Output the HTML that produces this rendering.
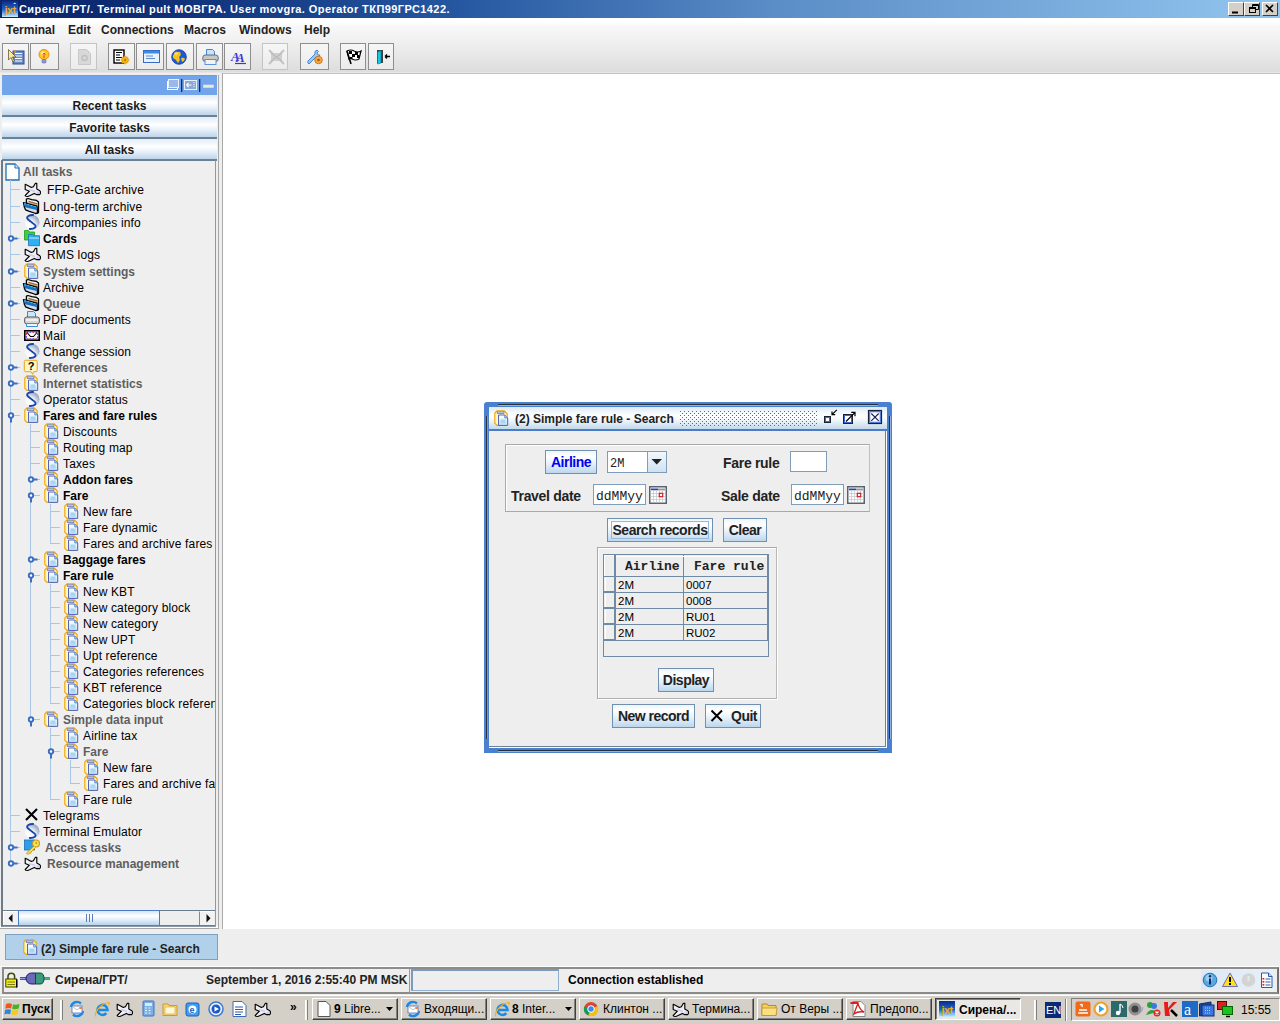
<!DOCTYPE html>
<html><head><meta charset="utf-8">
<style>
*{margin:0;padding:0;box-sizing:border-box}
html,body{width:1280px;height:1024px;overflow:hidden;background:#fff;font-family:"Liberation Sans",sans-serif;font-size:12px;color:#000}
.a{position:absolute}
.t{position:absolute;white-space:nowrap;line-height:16px;height:16px}
#tree .t{letter-spacing:0.15px}
#tree .t.b{letter-spacing:0}
.b{font-weight:bold}
.g{color:#5e5e5e}
.m{font-family:"Liberation Mono",monospace}
svg{position:absolute;overflow:visible}
/* toolbar button */
.tb{position:absolute;top:43px;width:27px;height:27px;border:1px solid #8e8e8e;background:linear-gradient(#f6f6f6,#ebebeb)}
.tb.d{border-color:#c4c4c4}
/* panel buttons */
.pb{position:absolute;left:2px;width:215px;height:22px;border-bottom:2px solid #6b8296;background:linear-gradient(#e2edf7 0%,#ffffff 40%,#e6eff8 65%,#bcd4ea 100%);text-align:center;font-weight:bold;color:#1a1a1a;line-height:21px;padding-top:1px;font-size:12px}
/* dialog buttons */
.db{position:absolute;border:1px solid #7190b0;background:linear-gradient(#eef5fb 0%,#ffffff 25%,#e9f2fa 55%,#bcd7ee 100%);font-weight:bold;font-size:14px;letter-spacing:-0.5px;color:#222;text-align:center}
/* taskbar buttons */
.kb{position:absolute;top:998px;height:22px;width:86px;background:#d4d0c8;border:1px solid;border-color:#fff #404040 #404040 #fff;box-shadow:inset -1px -1px #808080}
.kt{position:absolute;top:2px;white-space:nowrap;font-size:12px;line-height:16px;color:#000}
</style></head><body>
<svg width="0" height="0" style="position:absolute">
<defs>
<linearGradient id="gclip" x1="0" y1="0" x2="1" y2="0"><stop offset="0" stop-color="#fff2a0"/><stop offset="0.5" stop-color="#ffffff"/><stop offset="1" stop-color="#ffe98a"/></linearGradient>
<linearGradient id="gdoc" x1="0" y1="0" x2="0" y2="1"><stop offset="0" stop-color="#ffffff"/><stop offset="1" stop-color="#bfe3f7"/></linearGradient>
<radialGradient id="gs" cx="0.35" cy="0.7" r="0.8"><stop offset="0" stop-color="#ffffff"/><stop offset="0.5" stop-color="#e6ebf3"/><stop offset="1" stop-color="#7f93b8"/></radialGradient>
<symbol overflow="visible" id="i-clip" viewBox="0 0 16 16">
 <path d="M3 0.8 H10.2 L13.2 3.8 V12.6 L10.6 15.4 H3 L0.8 13.2 V3 Z" fill="url(#gclip)" stroke="#f2a400" stroke-width="1.1"/>
 <rect x="3.2" y="1.8" width="6.8" height="1.8" fill="#c9d3ec" stroke="#5a6fae" stroke-width="0.7"/>
 <path d="M4.5 5 h6.2 l3 3 v7.4 h-9.2z" fill="url(#gdoc)" stroke="#5361b6" stroke-width="1"/>
 <path d="M10.7 5 v3 h3" fill="#8ecff5" stroke="#5361b6" stroke-width="0.6"/>
 <rect x="6.5" y="9.5" width="5" height="4" fill="#a6d6f2"/>
</symbol>
<symbol overflow="visible" id="i-plane" viewBox="0 0 16 16">
 <path d="M1.2 3.2 L3.3 4.3 L7.3 6.4 L9.4 5.7 L11.4 2.3 L12.8 2.3 L12.8 8.1 L15.4 9.4 L16.4 10.6 L16.4 12.4 L15.6 13.6 L12.4 13.6 L10.3 12.4 L6.1 14.5 L3.8 15.5 L2 15.3 L1.2 14.5 L5.4 10.2 L1.2 8.5 Z" fill="#efeff6" stroke="#000" stroke-width="1.15" stroke-linejoin="round"/>
 <path d="M12.5 10.5 L15.6 10.8 L15.6 12.8 L12.6 12.8Z" fill="#cfc8f4"/>
 <path d="M5 8.5 L11 10.5" stroke="#d0cce8" stroke-width="1.5"/>
</symbol>
<symbol overflow="visible" id="i-arch" viewBox="0 0 16 16">
 <path d="M2.4 4.5 V1.2 L4 0.5 L7.7 1.6 L12.6 2.4 L14.5 4 V14.6 L11.8 15.5 Z" fill="#eeeef2" stroke="#000" stroke-width="1.3" stroke-linejoin="round"/>
 <path d="M4.5 3.3 L13.4 5.8 V13 L4.5 10Z" fill="#e2a466"/>
 <path d="M4.5 3.3 L13.4 5.8" stroke="#6a4a20" stroke-width="0.8"/>
 <path d="M-0.5 4.6 L13 8.2 L13.6 15 L11.8 15.5 L5.4 13.3 L1.5 11.8 L0.3 9 Z" fill="#d4dbe4" stroke="#000" stroke-width="1.3" stroke-linejoin="round"/>
 <path d="M0 5.3 L12.8 8.9 V12 L1 9.2 Z" fill="#1470c4"/>
 <path d="M0.3 5.6 L12.3 9" stroke="#44c4f4" stroke-width="1.1" stroke-dasharray="2 1.2"/>
</symbol>
<symbol overflow="visible" id="i-s" viewBox="0 0 16 16">
 <defs><radialGradient id="gs2" cx="0.25" cy="0.8" r="1"><stop offset="0" stop-color="#ffffff"/><stop offset="0.45" stop-color="#f2f4f8"/><stop offset="0.75" stop-color="#a8b8d0"/><stop offset="1" stop-color="#7d92b4"/></radialGradient></defs>
 <circle cx="8.2" cy="8.2" r="7.3" fill="url(#gs2)"/>
 <path d="M9.8 1 C5.5 0.6 1.5 2.5 3.8 5.2 L10.6 10.6 C13.2 13 10.5 15.4 5 14.9" fill="none" stroke="#1a46a8" stroke-width="1.9"/>
</symbol>
<symbol overflow="visible" id="i-cards" viewBox="0 0 16 16">
 <path d="M0.5 0.5 h4 l1 1.5 h5 v8 h-10z" fill="#3fcf3f" stroke="#1a9a1a" stroke-width="0.8"/>
 <path d="M4.5 4.5 h4 l1 1.2 h6 v10 h-11z" fill="#2fb0f0" stroke="#1a70c0" stroke-width="0.8"/>
 <rect x="5" y="7.5" width="10" height="1.2" fill="#a8e0ff"/>
</symbol>
<symbol overflow="visible" id="i-print" viewBox="0 0 16 16">
 <path d="M3.5 0.5 h6 l2 2 v6 h-8z" fill="#cfe6fa" stroke="#2f8ed8" stroke-width="1"/>
 <rect x="0.6" y="6" width="14.8" height="7" rx="2.2" fill="#d4d4d4" stroke="#555" stroke-width="1"/>
 <rect x="2" y="8" width="12" height="2" fill="#eeeeee"/>
 <path d="M2.5 12.5 h11 v3 h-11z" fill="#f4f4f4" stroke="#3a8ed8" stroke-width="1"/>
</symbol>
<symbol overflow="visible" id="i-mail" viewBox="0 0 16 16">
 <rect x="0.8" y="3.8" width="14.4" height="9.4" fill="#fff" stroke="#000" stroke-width="1.6"/>
 <path d="M2.3 5.3 H13.7 V11.7 H2.3 Z" fill="none" stroke="#e01818" stroke-width="1" stroke-dasharray="1 2"/>
 <path d="M3.3 5.3 H13.7 V11.7 H2.3 V5.3" fill="none" stroke="#1818e0" stroke-width="1" stroke-dasharray="1 2"/>
 <path d="M3 5.5 L6.5 9.5 H9.5 L13 5.5" fill="none" stroke="#000" stroke-width="1.1"/>
</symbol>
<symbol overflow="visible" id="i-quest" viewBox="0 0 16 16">
 <path d="M1.5 1.3 h10.5 a1.2 1.2 0 0 1 1.2 1.2 v9 a1.2 1.2 0 0 1 -1.2 1.2 h-2.5 l-0.8 2.6 l-1.6 -2.6 h-5.6 a1.2 1.2 0 0 1 -1.2 -1.2 v-9 a1.2 1.2 0 0 1 1.2 -1.2z" fill="#fff6c4" stroke="#eca21c" stroke-width="1"/>
 <text x="7.1" y="10.8" font-family="Liberation Sans" font-weight="bold" font-size="11" text-anchor="middle" fill="#000">?</text>
</symbol>
<symbol overflow="visible" id="i-x" viewBox="0 0 16 16">
 <path d="M2 2 L13 13 M13 2 L2 13" stroke="#000" stroke-width="2.1"/>
</symbol>
<symbol overflow="visible" id="i-key" viewBox="0 0 16 16">
 <rect x="0.5" y="1" width="10" height="10" fill="#2a9ee8" stroke="#1c6fb8" stroke-width="0.8"/>
 <circle cx="12" cy="4.5" r="3.5" fill="#f7df5a" stroke="#c79a18" stroke-width="1.1"/>
 <circle cx="12.3" cy="4" r="1" fill="#c79a18"/>
 <path d="M10 7 L2.5 14 L4 15.5 L5.5 14 L6.5 14.5 L7 13 L11.5 8.5" fill="#f7df5a" stroke="#c79a18" stroke-width="1"/>
</symbol>
<symbol overflow="visible" id="i-doc" viewBox="0 0 16 18">
 <path d="M1 1 h9 l4 4 v12 h-13z" fill="#fff" stroke="#1d6fb8" stroke-width="1.3"/>
 <path d="M10 1 v4 h4" fill="#d8e8f8" stroke="#1d6fb8" stroke-width="1"/>
</symbol>
<symbol overflow="visible" id="i-cal" viewBox="0 0 18 18">
 <rect x="0.75" y="0.75" width="16.5" height="16.5" fill="#fff" stroke="#58636e" stroke-width="1.5"/>
 <rect x="2" y="2.5" width="7" height="1.6" fill="#2a3ec0"/><rect x="9" y="2.5" width="7" height="1.6" fill="#9a9a9a"/>
 <path d="M1.5 4.5H16.5M1.5 7.5H16.5M1.5 10.5H16.5M1.5 13.5H16.5M4.5 4.5V16.5M7.5 4.5V16.5M10.5 4.5V16.5M13.5 4.5V16.5" stroke="#c8c8d0" stroke-width="0.8"/>
 <rect x="10.3" y="7.3" width="3.4" height="3.4" fill="#fff" stroke="#d02020" stroke-width="1.2"/>
</symbol>
<symbol overflow="visible" id="i-ie" viewBox="0 0 17 17">
 <path d="M4 9 H13.5 A5 5 0 1 0 12.3 12.2" fill="none" stroke="#1c8ae4" stroke-width="2.6"/>
 <path d="M2 15.5 C0 13 5 3 14.5 1.5 C16 1.5 15.5 3 14.5 4" fill="none" stroke="#f2b01a" stroke-width="1.2"/>
</symbol>
<symbol overflow="visible" id="i-ol" viewBox="0 0 16 16">
 <path d="M2 6 A6 6 0 0 1 12 2.5" fill="none" stroke="#1a8ae8" stroke-width="2.4"/>
 <path d="M14 10 A6 6 0 0 1 4 13.5" fill="none" stroke="#1a8ae8" stroke-width="2.4"/>
 <rect x="3" y="5" width="10" height="7" fill="#fff" stroke="#5a6ab0" stroke-width="0.8"/>
 <path d="M3 5 L8 9 L13 5" fill="none" stroke="#9ab" stroke-width="0.7"/>
 <rect x="10.5" y="6" width="2" height="2" fill="#e87a3a"/>
</symbol>
<symbol overflow="visible" id="x-c" viewBox="0 0 16 9">
 <circle cx="5" cy="4.5" r="2.2" fill="#fff" stroke="#3b6ec0" stroke-width="1.9"/>
 <path d="M7 4.5 H11.5" stroke="#3b6ec0" stroke-width="2"/>
</symbol>
<symbol overflow="visible" id="x-o" viewBox="0 0 16 9">
 <circle cx="5" cy="4.5" r="2.2" fill="#fff" stroke="#3b6ec0" stroke-width="1.9"/>
 <path d="M5 6.5 V11.5" stroke="#3b6ec0" stroke-width="2"/>
</symbol>
</defs>
</svg>

<!-- ============ TITLE BAR ============ -->
<div class="a" style="left:0;top:0;width:1280px;height:18px;background:linear-gradient(90deg,#0a246a 0%,#0e2e76 12%,#2456a0 35%,#5a8cc6 60%,#92c5ee 100%)"></div>
<div class="t b" style="left:19px;top:1px;color:#fff;font-size:11px;letter-spacing:0.42px">Сирена/ГРТ/. Terminal pult МОВГРА. User movgra. Operator ТКП99ГРС1422.</div>

<!-- ============ MENU + TOOLBAR BG ============ -->
<div class="a" style="left:0;top:18px;width:1280px;height:55px;background:linear-gradient(#ffffff 0%,#ffffff 6%,#f8f8f8 15%,#ececec 55%,#dcdcdc 100%)"></div>
<div class="a" style="left:0;top:72px;width:1280px;height:1px;background:#e6e6e6"></div>
<div class="a" style="left:0;top:73px;width:1280px;height:1px;background:#c4c4c4"></div>

<div class="t b" style="left:6px;top:22px;color:#222">Terminal</div>
<div class="t b" style="left:68px;top:22px;color:#222">Edit</div>
<div class="t b" style="left:101px;top:22px;color:#222">Connections</div>
<div class="t b" style="left:184px;top:22px;color:#222">Macros</div>
<div class="t b" style="left:239px;top:22px;color:#222">Windows</div>
<div class="t b" style="left:304px;top:22px;color:#222">Help</div>

<!-- toolbar buttons -->
<div class="tb" style="left:2px"></div>
<div class="tb" style="left:30px;width:29px"></div>
<div class="tb d" style="left:70px"></div>
<div class="tb" style="left:108px"></div>
<div class="tb" style="left:136px;width:28px"></div>
<div class="tb" style="left:166px;width:28px"></div>
<div class="tb" style="left:196px"></div>
<div class="tb" style="left:224px"></div>
<div class="tb d" style="left:262px;width:26px"></div>
<div class="tb" style="left:300px;width:29px"></div>
<div class="tb" style="left:340px;width:26px"></div>
<div class="tb" style="left:368px;width:26px"></div>

<!-- toolbar icons -->
<svg style="left:8px;top:49px" width="17" height="16"><rect x="5" y="2" width="11" height="13" fill="#6a8ac8" stroke="#2a4a88"/><path d="M7 4.5h7M7 7h7M7 9.5h7M7 12h7" stroke="#fff" stroke-width="1.2"/><path d="M0.5 0.5 L0.5 11 L3 8.5 L5 13 L6.5 12.2 L4.5 8 L8 8Z" fill="#f8e8a0" stroke="#6a5a30" stroke-width="0.8"/><circle cx="7" cy="2.5" r="1.3" fill="#f08020"/></svg>
<svg style="left:38px;top:49px" width="13" height="15"><circle cx="6" cy="5.5" r="5" fill="#ffc820" stroke="#f08a10" stroke-width="1"/><circle cx="5" cy="4.5" r="2" fill="#fff4a0"/><path d="M6 9 V4 L4.5 5.5 M6 4 L7.5 5.5" stroke="#e02020" stroke-width="0.8" fill="none"/><rect x="4" y="10.5" width="4" height="3.5" rx="1" fill="#8a9ad8" stroke="#5a6aa8" stroke-width="0.6"/></svg>
<svg style="left:78px;top:49px" width="13" height="16"><path d="M0.5 0.5h8l4 4v11H0.5z" fill="#d8d8d8" stroke="#c8c8c8"/><circle cx="6.5" cy="9" r="2.5" fill="none" stroke="#c0c0c0" stroke-width="1.5"/></svg>
<svg style="left:113px;top:49px" width="17" height="16"><rect x="1" y="1" width="10" height="13" fill="#fff" stroke="#000" stroke-width="1.4"/><path d="M3 3.5h6M3 6h4M3 8.5h6M3 11h4" stroke="#000" stroke-width="1.1"/><circle cx="12" cy="11" r="3.3" fill="#f8b818" stroke="#c07810" stroke-width="1"/><path d="M12 6.5V15.5M7.5 11H16.5M9 8L15 14M15 8L9 14" stroke="#f8b818" stroke-width="1.3"/><circle cx="12" cy="11" r="1.2" fill="#c07810"/></svg>
<svg style="left:143px;top:50px" width="17" height="13"><rect x="0.5" y="0.5" width="16" height="12" fill="#e8f2fc" stroke="#3a6ac8"/><rect x="1" y="1" width="15" height="2.5" fill="#3a8ae8"/><path d="M3 6h7M3 8.5h9" stroke="#5a8ad0" stroke-width="1.2"/></svg>
<svg style="left:171px;top:49px" width="16" height="16"><circle cx="8" cy="8" r="7.3" fill="#1a5ad8" stroke="#0e3aa0" stroke-width="0.8"/><path d="M3 5 Q6 2 9 3 Q11 6 8 8 Q10 11 7 14 Q5 10 2 9 Q1 7 3 5Z M10 9 Q13 8 14 10 Q13 13 11 13Z" fill="#f8c018"/><circle cx="5" cy="4.5" r="2" fill="#ffe880" opacity="0.6"/></svg>
<svg style="left:202px;top:49px" width="17" height="16"><path d="M4.5 0.5h6l2 2v5h-8z" fill="#c8e4fb" stroke="#3a8ad6"/><rect x="0.8" y="6" width="15.4" height="6.5" rx="2.5" fill="#c8c8c8" stroke="#6a6a6a"/><rect x="3" y="10.5" width="11" height="5" fill="#f2f2f2" stroke="#4a8ad8" stroke-width="0.9"/></svg>
<svg style="left:231px;top:50px" width="16" height="15"><text x="0" y="11" font-family="Liberation Serif" font-style="italic" font-weight="bold" font-size="13" fill="#3a3ad8">A</text><text x="5" y="12" font-family="Liberation Serif" font-style="italic" font-weight="bold" font-size="13" fill="#3a3ad8">A</text><path d="M4 13.5h11" stroke="#3a3ad8" stroke-width="1.2"/></svg>
<svg style="left:268px;top:49px" width="17" height="16"><path d="M1 1 L5 5 H12 L16 1 M1 15 L5 11 H12 L16 15" stroke="#c4c4c4" stroke-width="2" fill="none"/><rect x="3" y="4" width="11" height="8" fill="#cfcfcf"/><path d="M3 4 L14 12 M14 4 L3 12" stroke="#bbb" stroke-width="1.3"/></svg>
<svg style="left:306px;top:49px" width="18" height="16"><path d="M11 1 Q8 2 9 5 L2 12 Q1 14 3 15 L10 8 Q13 9 14 6 L12 6 L11 4 L12.5 2.5Z" fill="#9ac8f0" stroke="#3a7ad0" stroke-width="0.9"/><circle cx="12.5" cy="11" r="3.8" fill="#f8a838" stroke="#c86a10" stroke-width="0.8"/><circle cx="12.5" cy="11" r="1.3" fill="#9a5a20"/></svg>
<svg style="left:346px;top:49px" width="17" height="16"><path d="M1 2 Q5 0 8 2 Q12 4 15 2 L13 10 Q10 12 6 10 Q4 9 3 10Z" fill="#fff" stroke="#000" stroke-width="1.2"/><path d="M3 2 h3 v3 h-3z M9 3 h3 v3 h-3z M6 5 h3 v3 h-3z M3.5 8 h3 v2 h-3z M11 6 h2.5 v3 h-2.5z" fill="#000"/><path d="M1 2 L5 15" stroke="#000" stroke-width="1.6"/></svg>
<svg style="left:376px;top:49px" width="15" height="16"><rect x="1" y="1" width="6" height="13" fill="#404040"/><path d="M1.5 3 L5 1.5 V14 L1.5 15Z" fill="#18c8e0" stroke="#0a6a8a" stroke-width="0.6"/><path d="M9 7.5H14 M9 7.5 L11 5.5 M9 7.5 L11 9.5" stroke="#000" stroke-width="1.3" fill="none"/></svg>
<!-- title bar icon + window buttons -->
<svg style="left:2px;top:1px" width="16" height="16"><defs><linearGradient id="gjx" x1="0" y1="0" x2="0" y2="1"><stop offset="0" stop-color="#0a2a8a"/><stop offset="0.55" stop-color="#1a6ad0"/><stop offset="1" stop-color="#c8f0ff"/></linearGradient></defs><rect width="16" height="16" fill="url(#gjx)"/><path d="M11 3 L13 1.5 L14 3Z" fill="#bff"/><text x="2.5" y="12.5" font-family="Liberation Sans" font-weight="bold" font-size="11" letter-spacing="-0.6" fill="#f0a818">jxt</text></svg>
<div class="a" style="left:1228px;top:2px;width:16px;height:14px;background:#d4d0c8;border:1px solid;border-color:#fff #404040 #404040 #fff"></div>
<div class="a" style="left:1244px;top:2px;width:16px;height:14px;background:#d4d0c8;border:1px solid;border-color:#fff #404040 #404040 #fff"></div>
<div class="a" style="left:1262px;top:2px;width:16px;height:14px;background:#d4d0c8;border:1px solid;border-color:#fff #404040 #404040 #fff"></div>
<svg style="left:1228px;top:2px" width="52" height="14"><path d="M4 10.5h6" stroke="#000" stroke-width="2"/><rect x="21.5" y="5.5" width="6" height="5" fill="none" stroke="#000"/><path d="M21.5 6.5h6" stroke="#000"/><path d="M24.5 5.5V2.5H30.5V7.5H27.5M24.5 3.5h6" fill="none" stroke="#000"/><path d="M38 3 L45 10 M45 3 L38 10" stroke="#000" stroke-width="1.6"/></svg>
<!-- ============ LEFT PANEL ============ -->
<div class="a" style="left:0;top:73px;width:222px;height:856px;background:#eeeeee"></div>
<div class="a" style="left:0px;top:75px;width:219px;height:854px;border:1px solid #a8a8a8;border-top:none;border-left:none;box-shadow:inset 0 -2px 0 #fff"></div>
<div class="a" style="left:222px;top:73px;width:1px;height:856px;background:#a9a9a9"></div>
<!-- header -->
<div class="a" style="left:2px;top:75px;width:215px;height:20px;background:#72a4ec;border-top:1px solid #8a98a8"></div>
<div class="pb" style="top:95px">Recent tasks</div>
<div class="pb" style="top:117px">Favorite tasks</div>
<div class="pb" style="top:139px">All tasks</div>
<!-- tree area -->
<div class="a" style="left:1px;top:160px;width:215px;height:767px;background:#efefef;border:1px solid #8a9aaa;border-left:2px solid #6d7a88;border-top:1px solid #6b7f92"></div>
<div id="tree" class="a" style="left:0;top:0;width:215px;height:909px;overflow:hidden">
<svg style="left:5px;top:163px" width="16" height="18"><use href="#i-doc"/></svg>
<div class="t b g" style="left:23px;top:164px">All tasks</div>
<div class="a" style="left:10px;top:180px;width:1px;height:684px;background:#a9c6e6"></div>
<div class="a" style="left:30px;top:424px;width:1px;height:296px;background:#a9c6e6"></div>
<div class="a" style="left:50px;top:504px;width:1px;height:40px;background:#a9c6e6"></div>
<div class="a" style="left:50px;top:584px;width:1px;height:120px;background:#a9c6e6"></div>
<div class="a" style="left:50px;top:728px;width:1px;height:72px;background:#a9c6e6"></div>
<div class="a" style="left:70px;top:760px;width:1px;height:24px;background:#a9c6e6"></div>
<div class="a" style="left:10px;top:189px;width:10px;height:1px;background:#a9c6e6"></div>
<svg style="left:24px;top:181px" width="16" height="16"><use href="#i-plane"/></svg>
<div class="t" style="left:47px;top:182px">FFP-Gate archive</div>
<div class="a" style="left:10px;top:206px;width:10px;height:1px;background:#a9c6e6"></div>
<svg style="left:24px;top:198px" width="16" height="16"><use href="#i-arch"/></svg>
<div class="t" style="left:43px;top:199px">Long-term archive</div>
<div class="a" style="left:10px;top:222px;width:10px;height:1px;background:#a9c6e6"></div>
<svg style="left:24px;top:214px" width="16" height="16"><use href="#i-s"/></svg>
<div class="t" style="left:43px;top:215px">Aircompanies info</div>
<div class="a" style="left:10px;top:238px;width:10px;height:1px;background:#a9c6e6"></div>
<svg style="left:24px;top:230px" width="16" height="16"><use href="#i-cards"/></svg>
<div class="t b" style="left:43px;top:231px">Cards</div>
<svg style="left:6px;top:234px" width="16" height="9"><use href="#x-c"/></svg>
<div class="a" style="left:10px;top:254px;width:10px;height:1px;background:#a9c6e6"></div>
<svg style="left:24px;top:246px" width="16" height="16"><use href="#i-plane"/></svg>
<div class="t" style="left:47px;top:247px">RMS logs</div>
<div class="a" style="left:10px;top:271px;width:10px;height:1px;background:#a9c6e6"></div>
<svg style="left:24px;top:263px" width="16" height="16"><use href="#i-clip"/></svg>
<div class="t b g" style="left:43px;top:264px">System settings</div>
<svg style="left:6px;top:267px" width="16" height="9"><use href="#x-c"/></svg>
<div class="a" style="left:10px;top:287px;width:10px;height:1px;background:#a9c6e6"></div>
<svg style="left:24px;top:279px" width="16" height="16"><use href="#i-arch"/></svg>
<div class="t" style="left:43px;top:280px">Archive</div>
<div class="a" style="left:10px;top:303px;width:10px;height:1px;background:#a9c6e6"></div>
<svg style="left:24px;top:295px" width="16" height="16"><use href="#i-arch"/></svg>
<div class="t b g" style="left:43px;top:296px">Queue</div>
<svg style="left:6px;top:299px" width="16" height="9"><use href="#x-c"/></svg>
<div class="a" style="left:10px;top:319px;width:10px;height:1px;background:#a9c6e6"></div>
<svg style="left:24px;top:311px" width="16" height="16"><use href="#i-print"/></svg>
<div class="t" style="left:43px;top:312px">PDF documents</div>
<div class="a" style="left:10px;top:335px;width:10px;height:1px;background:#a9c6e6"></div>
<svg style="left:24px;top:327px" width="16" height="16"><use href="#i-mail"/></svg>
<div class="t" style="left:43px;top:328px">Mail</div>
<div class="a" style="left:10px;top:351px;width:10px;height:1px;background:#a9c6e6"></div>
<svg style="left:24px;top:343px" width="16" height="16"><use href="#i-s"/></svg>
<div class="t" style="left:43px;top:344px">Change session</div>
<div class="a" style="left:10px;top:367px;width:10px;height:1px;background:#a9c6e6"></div>
<svg style="left:24px;top:359px" width="16" height="16"><use href="#i-quest"/></svg>
<div class="t b g" style="left:43px;top:360px">References</div>
<svg style="left:6px;top:363px" width="16" height="9"><use href="#x-c"/></svg>
<div class="a" style="left:10px;top:383px;width:10px;height:1px;background:#a9c6e6"></div>
<svg style="left:24px;top:375px" width="16" height="16"><use href="#i-clip"/></svg>
<div class="t b g" style="left:43px;top:376px">Internet statistics</div>
<svg style="left:6px;top:379px" width="16" height="9"><use href="#x-c"/></svg>
<div class="a" style="left:10px;top:399px;width:10px;height:1px;background:#a9c6e6"></div>
<svg style="left:24px;top:391px" width="16" height="16"><use href="#i-s"/></svg>
<div class="t" style="left:43px;top:392px">Operator status</div>
<div class="a" style="left:10px;top:415px;width:10px;height:1px;background:#a9c6e6"></div>
<svg style="left:24px;top:407px" width="16" height="16"><use href="#i-clip"/></svg>
<div class="t b" style="left:43px;top:408px">Fares and fare rules</div>
<svg style="left:6px;top:411px" width="16" height="9"><use href="#x-o"/></svg>
<div class="a" style="left:30px;top:431px;width:10px;height:1px;background:#a9c6e6"></div>
<svg style="left:44px;top:423px" width="16" height="16"><use href="#i-clip"/></svg>
<div class="t" style="left:63px;top:424px">Discounts</div>
<div class="a" style="left:30px;top:447px;width:10px;height:1px;background:#a9c6e6"></div>
<svg style="left:44px;top:439px" width="16" height="16"><use href="#i-clip"/></svg>
<div class="t" style="left:63px;top:440px">Routing map</div>
<div class="a" style="left:30px;top:463px;width:10px;height:1px;background:#a9c6e6"></div>
<svg style="left:44px;top:455px" width="16" height="16"><use href="#i-clip"/></svg>
<div class="t" style="left:63px;top:456px">Taxes</div>
<div class="a" style="left:30px;top:479px;width:10px;height:1px;background:#a9c6e6"></div>
<svg style="left:44px;top:471px" width="16" height="16"><use href="#i-clip"/></svg>
<div class="t b" style="left:63px;top:472px">Addon fares</div>
<svg style="left:26px;top:475px" width="16" height="9"><use href="#x-c"/></svg>
<div class="a" style="left:30px;top:495px;width:10px;height:1px;background:#a9c6e6"></div>
<svg style="left:44px;top:487px" width="16" height="16"><use href="#i-clip"/></svg>
<div class="t b" style="left:63px;top:488px">Fare</div>
<svg style="left:26px;top:491px" width="16" height="9"><use href="#x-o"/></svg>
<div class="a" style="left:50px;top:511px;width:10px;height:1px;background:#a9c6e6"></div>
<svg style="left:64px;top:503px" width="16" height="16"><use href="#i-clip"/></svg>
<div class="t" style="left:83px;top:504px">New fare</div>
<div class="a" style="left:50px;top:527px;width:10px;height:1px;background:#a9c6e6"></div>
<svg style="left:64px;top:519px" width="16" height="16"><use href="#i-clip"/></svg>
<div class="t" style="left:83px;top:520px">Fare dynamic</div>
<div class="a" style="left:50px;top:543px;width:10px;height:1px;background:#a9c6e6"></div>
<svg style="left:64px;top:535px" width="16" height="16"><use href="#i-clip"/></svg>
<div class="t" style="left:83px;top:536px">Fares and archive fares</div>
<div class="a" style="left:30px;top:559px;width:10px;height:1px;background:#a9c6e6"></div>
<svg style="left:44px;top:551px" width="16" height="16"><use href="#i-clip"/></svg>
<div class="t b" style="left:63px;top:552px">Baggage fares</div>
<svg style="left:26px;top:555px" width="16" height="9"><use href="#x-c"/></svg>
<div class="a" style="left:30px;top:575px;width:10px;height:1px;background:#a9c6e6"></div>
<svg style="left:44px;top:567px" width="16" height="16"><use href="#i-clip"/></svg>
<div class="t b" style="left:63px;top:568px">Fare rule</div>
<svg style="left:26px;top:571px" width="16" height="9"><use href="#x-o"/></svg>
<div class="a" style="left:50px;top:591px;width:10px;height:1px;background:#a9c6e6"></div>
<svg style="left:64px;top:583px" width="16" height="16"><use href="#i-clip"/></svg>
<div class="t" style="left:83px;top:584px">New KBT</div>
<div class="a" style="left:50px;top:607px;width:10px;height:1px;background:#a9c6e6"></div>
<svg style="left:64px;top:599px" width="16" height="16"><use href="#i-clip"/></svg>
<div class="t" style="left:83px;top:600px">New category block</div>
<div class="a" style="left:50px;top:623px;width:10px;height:1px;background:#a9c6e6"></div>
<svg style="left:64px;top:615px" width="16" height="16"><use href="#i-clip"/></svg>
<div class="t" style="left:83px;top:616px">New category</div>
<div class="a" style="left:50px;top:639px;width:10px;height:1px;background:#a9c6e6"></div>
<svg style="left:64px;top:631px" width="16" height="16"><use href="#i-clip"/></svg>
<div class="t" style="left:83px;top:632px">New UPT</div>
<div class="a" style="left:50px;top:655px;width:10px;height:1px;background:#a9c6e6"></div>
<svg style="left:64px;top:647px" width="16" height="16"><use href="#i-clip"/></svg>
<div class="t" style="left:83px;top:648px">Upt reference</div>
<div class="a" style="left:50px;top:671px;width:10px;height:1px;background:#a9c6e6"></div>
<svg style="left:64px;top:663px" width="16" height="16"><use href="#i-clip"/></svg>
<div class="t" style="left:83px;top:664px">Categories references</div>
<div class="a" style="left:50px;top:687px;width:10px;height:1px;background:#a9c6e6"></div>
<svg style="left:64px;top:679px" width="16" height="16"><use href="#i-clip"/></svg>
<div class="t" style="left:83px;top:680px">KBT reference</div>
<div class="a" style="left:50px;top:703px;width:10px;height:1px;background:#a9c6e6"></div>
<svg style="left:64px;top:695px" width="16" height="16"><use href="#i-clip"/></svg>
<div class="t" style="left:83px;top:696px">Categories block references</div>
<div class="a" style="left:30px;top:719px;width:10px;height:1px;background:#a9c6e6"></div>
<svg style="left:44px;top:711px" width="16" height="16"><use href="#i-clip"/></svg>
<div class="t b g" style="left:63px;top:712px">Simple data input</div>
<svg style="left:26px;top:715px" width="16" height="9"><use href="#x-o"/></svg>
<div class="a" style="left:50px;top:735px;width:10px;height:1px;background:#a9c6e6"></div>
<svg style="left:64px;top:727px" width="16" height="16"><use href="#i-clip"/></svg>
<div class="t" style="left:83px;top:728px">Airline tax</div>
<div class="a" style="left:50px;top:751px;width:10px;height:1px;background:#a9c6e6"></div>
<svg style="left:64px;top:743px" width="16" height="16"><use href="#i-clip"/></svg>
<div class="t b g" style="left:83px;top:744px">Fare</div>
<svg style="left:46px;top:747px" width="16" height="9"><use href="#x-o"/></svg>
<div class="a" style="left:70px;top:767px;width:10px;height:1px;background:#a9c6e6"></div>
<svg style="left:84px;top:759px" width="16" height="16"><use href="#i-clip"/></svg>
<div class="t" style="left:103px;top:760px">New fare</div>
<div class="a" style="left:70px;top:783px;width:10px;height:1px;background:#a9c6e6"></div>
<svg style="left:84px;top:775px" width="16" height="16"><use href="#i-clip"/></svg>
<div class="t" style="left:103px;top:776px">Fares and archive fares</div>
<div class="a" style="left:50px;top:799px;width:10px;height:1px;background:#a9c6e6"></div>
<svg style="left:64px;top:791px" width="16" height="16"><use href="#i-clip"/></svg>
<div class="t" style="left:83px;top:792px">Fare rule</div>
<div class="a" style="left:10px;top:815px;width:10px;height:1px;background:#a9c6e6"></div>
<svg style="left:24px;top:807px" width="16" height="16"><use href="#i-x"/></svg>
<div class="t" style="left:43px;top:808px">Telegrams</div>
<div class="a" style="left:10px;top:831px;width:10px;height:1px;background:#a9c6e6"></div>
<svg style="left:24px;top:823px" width="16" height="16"><use href="#i-s"/></svg>
<div class="t" style="left:43px;top:824px">Terminal Emulator</div>
<div class="a" style="left:10px;top:847px;width:10px;height:1px;background:#a9c6e6"></div>
<svg style="left:24px;top:839px" width="16" height="16"><use href="#i-key"/></svg>
<div class="t b g" style="left:45px;top:840px">Access tasks</div>
<svg style="left:6px;top:843px" width="16" height="9"><use href="#x-c"/></svg>
<div class="a" style="left:10px;top:863px;width:10px;height:1px;background:#a9c6e6"></div>
<svg style="left:24px;top:855px" width="16" height="16"><use href="#i-plane"/></svg>
<div class="t b g" style="left:47px;top:856px">Resource management</div>
<svg style="left:6px;top:859px" width="16" height="9"><use href="#x-c"/></svg>
</div>
<!-- h scrollbar -->

<!-- ============ DIALOG ============ -->
<div class="a" style="left:484px;top:402px;width:408px;height:351px;background:#4a80d0;border-radius:3px 3px 0 0"></div>
<div class="a" style="left:498px;top:404px;width:380px;height:1px;background:#27313e"></div>
<div class="a" style="left:498px;top:750px;width:380px;height:1px;background:#27313e"></div>
<div class="a" style="left:486px;top:416px;width:1px;height:323px;background:#27313e"></div>
<div class="a" style="left:889px;top:416px;width:1px;height:323px;background:#27313e"></div>
<div class="a" style="left:498px;top:405px;width:380px;height:1px;background:#8fb2e0"></div>
<div class="a" style="left:498px;top:751px;width:380px;height:1px;background:#8fb2e0"></div>
<div class="a" style="left:487px;top:416px;width:1px;height:323px;background:#6f9ad8"></div>
<div class="a" style="left:890px;top:416px;width:1px;height:323px;background:#8fb2e0"></div>
<!-- title -->
<div class="a" style="left:489px;top:407px;width:398px;height:22px;background:linear-gradient(#dce9f6 0%,#f4f9fd 25%,#ffffff 45%,#e4eff8 70%,#c3d9ea 100%)"></div>
<svg style="left:680px;top:410px" width="138" height="17"><defs><pattern id="dots" width="4" height="4" patternUnits="userSpaceOnUse"><rect x="0" y="1" width="1" height="1" fill="#5565b5"/><rect x="2" y="3" width="1" height="1" fill="#5565b5"/></pattern></defs><rect width="138" height="16" fill="url(#dots)"/></svg>
<svg style="left:494px;top:410px" width="16" height="16"><use href="#i-clip"/></svg>
<div class="t b" style="left:515px;top:411px;color:#222;font-size:12px">(2) Simple fare rule - Search</div>
<!-- title buttons -->
<svg style="left:822px;top:409px" width="64" height="18">
 <rect x="2.5" y="7.5" width="6" height="6" fill="none" stroke="#1a2238" stroke-width="1"/>
 <rect x="3.5" y="8.5" width="4" height="4" fill="#fff" stroke="#3a6ad0" stroke-width="1"/>
 <path d="M14.8 0.8 L10 5.6 M10 2.4 V5.6 H13.2" fill="none" stroke="#000" stroke-width="1.2"/>
 <rect x="21.5" y="5.5" width="9" height="9" fill="none" stroke="#1a2238" stroke-width="1"/>
 <rect x="22.5" y="6.5" width="7" height="7" fill="#fff" stroke="#3a6ad0" stroke-width="1"/>
 <path d="M24 12.5 L32.6 3.9 M29.2 3.4 H33 V7.2" fill="none" stroke="#000" stroke-width="1.2"/>
 <rect x="46.5" y="1.5" width="13" height="13" fill="none" stroke="#1a2238" stroke-width="1.2"/>
 <rect x="47.7" y="2.7" width="10.6" height="10.6" fill="#fff" stroke="#3a6ad0" stroke-width="1.1"/>
 <path d="M49.3 4.5 L56.7 11.9 M56.7 4.5 L49.3 11.9" fill="none" stroke="#18205a" stroke-width="1.1"/>
</svg>
<div class="a" style="left:489px;top:429px;width:398px;height:2px;background:#4a7cc8"></div>
<!-- content -->
<div class="a" style="left:489px;top:431px;width:398px;height:317px;background:#eeeeee;border-right:1px solid #fff;border-bottom:1px solid #fff"></div>
<div class="a" style="left:489px;top:431px;width:397px;height:316px;border-right:1px solid #6e8294;border-bottom:1px solid #6e8294"></div>
<!-- group box -->
<div class="a" style="left:505px;top:444px;width:365px;height:68px;border:1px solid #a8a8a8;border-right-color:#c0c0c0;box-shadow:1px 1px 0 #fff inset"></div>
<div class="db" style="left:545px;top:450px;width:52px;height:24px;line-height:22px;color:#0000f0">Airline</div>
<div class="a" style="left:607px;top:451px;width:60px;height:22px;border:1px solid #7f9db9;background:#fff"></div>
<div class="t m" style="left:610px;top:456px;font-size:12px;color:#222">2M</div>
<div class="a" style="left:647px;top:452px;width:19px;height:20px;border-left:1px solid #7f9db9;background:linear-gradient(#f2f8fd,#cfe2f3)"></div>
<svg style="left:651px;top:459px" width="12" height="8"><path d="M0.5 0 H11 L5.75 5.5 Z" fill="#222"/></svg>
<div class="t b" style="left:723px;top:455px;font-size:14px;color:#222;letter-spacing:-0.3px">Fare rule</div>
<div class="a" style="left:790px;top:451px;width:37px;height:21px;border:1px solid #7f9db9;background:#fff"></div>
<div class="t b" style="left:511px;top:488px;font-size:14px;color:#222;letter-spacing:-0.3px">Travel date</div>
<div class="a" style="left:593px;top:484px;width:53px;height:21px;border:1px solid #7f9db9;background:#fff"></div>
<div class="t m" style="left:596px;top:489px;font-size:13px;color:#222">ddMMyy</div>
<svg style="left:649px;top:486px" width="18" height="18" class="cal"><use href="#i-cal"/></svg>
<div class="t b" style="left:721px;top:488px;font-size:14px;color:#222;letter-spacing:-0.3px">Sale date</div>
<div class="a" style="left:791px;top:484px;width:53px;height:21px;border:1px solid #7f9db9;background:#fff"></div>
<div class="t m" style="left:794px;top:489px;font-size:13px;color:#222">ddMMyy</div>
<svg style="left:847px;top:486px" width="18" height="18"><use href="#i-cal"/></svg>
<!-- search / clear -->
<div class="db" style="left:607px;top:518px;width:106px;height:24px;line-height:22px">Search records</div>
<div class="a" style="left:611px;top:521px;width:98px;height:18px;border:1px solid #9ab8d8"></div>
<div class="db" style="left:723px;top:518px;width:44px;height:24px;line-height:22px">Clear</div>
<!-- results panel -->
<div class="a" style="left:597px;top:547px;width:180px;height:152px;border:1px solid #a8a8a8;border-right-color:#b8b8b8;border-bottom-color:#b0b0b0;box-shadow:1px 1px 0 #fff, inset 1px 1px 0 #fff"></div>
<div class="a" style="left:603px;top:554px;width:166px;height:103px;border:1px solid #6e8aa4;background:#eeeeee"></div>
<div class="a" style="left:604px;top:555px;width:11px;height:21px;background:#eeeeee;border:1px solid #fff;border-right:none;border-bottom:none"></div>
<div class="a" style="left:614px;top:555px;width:2px;height:85px;background:#6e8aa4"></div>
<div class="a" style="left:604px;top:576px;width:164px;height:1px;background:#6e8aa4"></div>
<div class="a" style="left:683px;top:555px;width:1px;height:85px;background:#6e8aa4"></div>
<div class="a" style="left:767px;top:555px;width:1px;height:85px;background:#6e8aa4"></div>
<div class="a" style="left:604px;top:640px;width:164px;height:1px;background:#6e8aa4"></div>
<div class="a" style="left:615px;top:592px;width:153px;height:1px;background:#6e8aa4"></div>
<div class="a" style="left:615px;top:608px;width:153px;height:1px;background:#6e8aa4"></div>
<div class="a" style="left:615px;top:624px;width:153px;height:1px;background:#6e8aa4"></div>
<div class="a" style="left:604px;top:591px;width:10px;height:2px;background:#6e8aa4"></div>
<div class="a" style="left:604px;top:607px;width:10px;height:2px;background:#6e8aa4"></div>
<div class="a" style="left:604px;top:623px;width:10px;height:2px;background:#6e8aa4"></div>
<div class="a" style="left:604px;top:639px;width:10px;height:2px;background:#6e8aa4"></div>
<div class="a" style="left:605px;top:578px;width:1px;height:13px;background:#fff"></div>
<div class="a" style="left:605px;top:594px;width:1px;height:13px;background:#fff"></div>
<div class="a" style="left:605px;top:610px;width:1px;height:13px;background:#fff"></div>
<div class="a" style="left:605px;top:626px;width:1px;height:13px;background:#fff"></div>
<div class="a" style="left:616px;top:556px;width:151px;height:1px;background:#fff"></div>
<div class="t m b" style="left:625px;top:559px;font-size:13px;color:#222">Airline</div>
<div class="t m b" style="left:694px;top:559px;font-size:13px;color:#222">Fare rule</div>
<div class="t" style="left:618px;top:577px;font-size:11.5px">2M</div>
<div class="t" style="left:686px;top:577px;font-size:11.5px">0007</div>
<div class="t" style="left:618px;top:593px;font-size:11.5px">2M</div>
<div class="t" style="left:686px;top:593px;font-size:11.5px">0008</div>
<div class="t" style="left:618px;top:609px;font-size:11.5px">2M</div>
<div class="t" style="left:686px;top:609px;font-size:11.5px">RU01</div>
<div class="t" style="left:618px;top:625px;font-size:11.5px">2M</div>
<div class="t" style="left:686px;top:625px;font-size:11.5px">RU02</div>

<div class="db" style="left:658px;top:668px;width:56px;height:24px;line-height:22px">Display</div>
<div class="db" style="left:612px;top:704px;width:83px;height:24px;line-height:22px">New record</div>
<div class="db" style="left:705px;top:704px;width:56px;height:24px;line-height:22px;text-align:left;padding-left:25px">Quit</div>
<svg style="left:710px;top:709px" width="14" height="14"><path d="M1.5 1.5 L12 12 M12 1.5 L1.5 12" stroke="#000" stroke-width="2"/></svg>

<!-- ============ BOTTOM AREA ============ -->
<div class="a" style="left:0;top:929px;width:1280px;height:38px;background:#eeeeee"></div>
<div class="a" style="left:5px;top:934px;width:213px;height:26px;background:#b1d0ea;border:1px solid #7d9fc0"></div>
<div class="t b" style="left:41px;top:941px;color:#222">(2) Simple fare rule - Search</div>

<!-- status bar -->
<div class="a" style="left:0;top:966px;width:1280px;height:28px;background:#eeeeee;border-top:1px solid #fff"></div>
<div class="a" style="left:2px;top:967px;width:1277px;height:27px;border:2px solid #8c8c8a;border-right-color:#707070;border-bottom-color:#8a8a88"></div>
<div class="t b" style="left:55px;top:972px;color:#222">Сирена/ГРТ/</div>
<div class="t b" style="left:206px;top:972px;color:#222">September 1, 2016 2:55:40 PM MSK</div>
<div class="a" style="left:409px;top:969px;width:1px;height:24px;background:#9a9a9a"></div><div class="a" style="left:411px;top:969px;width:148px;height:22px;border:1px solid #8fb0d0;border-top:2px solid #7d9ab8;border-left:2px solid #7d9ab8;background:#eeeeee"></div>
<div class="t b" style="left:568px;top:972px;color:#000">Connection established</div>

<!-- panel header icons -->
<svg style="left:166px;top:79px" width="52" height="13">
 <rect x="1.5" y="2.5" width="10" height="8" fill="none" stroke="#fff" stroke-width="1"/>
 <rect x="2.5" y="0.5" width="10" height="8" fill="#9ab8e8" stroke="#e8f0fc" stroke-width="1"/>
 <rect x="15" y="0" width="1.3" height="13" fill="#0e2a78"/>
 <rect x="18.5" y="1.5" width="12" height="9" fill="#8aa8d8" stroke="#e8f0fc"/>
 <path d="M20.5 6h5M20.5 6 L22.5 4M20.5 6 L22.5 8" stroke="#fff" stroke-width="1.1" fill="none"/>
 <rect x="27.5" y="3" width="1" height="1" fill="#fff"/><rect x="27.5" y="5" width="1" height="1" fill="#fff"/><rect x="27.5" y="7" width="1" height="1" fill="#fff"/>
 <rect x="33" y="0" width="1.3" height="13" fill="#0e2a78"/>
 <rect x="37.5" y="6" width="10" height="2.5" fill="#f0e8d8" stroke="#d8e4f8" stroke-width="0.6"/>
</svg>
<!-- scrollbar -->
<div class="a" style="left:3px;top:910px;width:212px;height:16px;background:#eeeeee;border-top:1px solid #6a7d90;border-bottom:1px solid #6a7d90"></div>
<div class="a" style="left:3px;top:911px;width:15px;height:14px;background:#f2f2f2;border-top:1px solid #fff;border-left:1px solid #fff"></div>
<div class="a" style="left:199px;top:911px;width:15px;height:14px;background:#f2f2f2;border-top:1px solid #fff;border-left:1px solid #7a8da0"></div>
<svg style="left:8px;top:914px" width="6" height="10"><path d="M4.5 0V8.5L0.5 4.25Z" fill="#111"/></svg>
<div class="a" style="left:18px;top:910px;width:142px;height:16px;border:1px solid #4a7ac8;border-bottom-color:#6a7d90;border-right-width:1px;background:linear-gradient(#d4e6f6 0%,#ffffff 35%,#e6f0f9 60%,#b6d2ec 100%)"></div>
<div class="a" style="left:86px;top:914px;width:7px;height:8px;border-left:1px solid #5a7ab8;border-right:1px solid #5a7ab8"></div>
<div class="a" style="left:89px;top:914px;width:1px;height:8px;background:#5a7ab8"></div>

<svg style="left:206px;top:914px" width="6" height="10"><path d="M0.5 0V8.5L4.5 4.25Z" fill="#111"/></svg>
<!-- window tab icon -->
<svg style="left:23px;top:939px" width="16" height="16"><use href="#i-clip"/></svg>
<!-- status bar icons -->
<svg style="left:5px;top:972px" width="13" height="16"><path d="M3 7 V4.5 A3.3 3.3 0 0 1 9.6 4.5 V7" fill="none" stroke="#4a4a10" stroke-width="1.6"/><rect x="0.8" y="7" width="10.8" height="8" fill="#f4f010" stroke="#3a3a00" stroke-width="1"/><rect x="11" y="7.5" width="1.5" height="8" fill="#000"/><path d="M2.5 10h7.5M2.5 12.5h7.5" stroke="#6a6a20" stroke-width="0.9"/></svg>
<svg style="left:20px;top:972px" width="31" height="14"><path d="M0 6.5h8" stroke="#2a2a80" stroke-width="2.6"/><path d="M0 6.5h8" stroke="#a8a8f0" stroke-width="0.9"/><path d="M24 6.5h6" stroke="#1a6a4a" stroke-width="2.4"/><path d="M24 6.5h6" stroke="#5ac8a0" stroke-width="0.8"/><path d="M15.5 1 H11.5 A5.5 5.5 0 0 0 11.5 12 H15.5Z" fill="#6a6ab8" stroke="#1a1a60" stroke-width="1"/><path d="M15.5 1 H20 Q24 1 24 6.5 Q24 12 20 12 H15.5Z" fill="#3a9a7a" stroke="#0a4a3a" stroke-width="1"/></svg>
<div class="a" style="left:1201px;top:970px;width:72px;height:20px;background:linear-gradient(90deg,#dce8f6,#e8f0f8)"></div>
<svg style="left:1203px;top:972px" width="70" height="16">
 <circle cx="7" cy="8" r="6.8" fill="#5aa8e0" stroke="#2a70b0"/><circle cx="6" cy="6" r="3.5" fill="#b8e0fa" opacity="0.7"/><rect x="6" y="6.5" width="2" height="6" fill="#0e2a60"/><circle cx="7" cy="4.3" r="1.2" fill="#0e2a60"/>
 <path d="M27 1 L34.5 14.5 H19.5Z" fill="#fbe21a" stroke="#6a5ab0" stroke-width="0.9"/><rect x="26" y="5" width="2" height="5" fill="#000"/><rect x="26" y="11" width="2" height="2" fill="#000"/>
 <circle cx="45.5" cy="8" r="6.8" fill="#d4d4d4"/><rect x="44.5" y="4" width="2" height="5" fill="#e8e8e8"/>
 <path d="M58.5 1 h7 l3.5 3.5 v11 h-10.5z" fill="#fff" stroke="#2a5aa8"/><path d="M65.5 1 v3.5 h3.5" fill="#b8d8f8" stroke="#2a5aa8"/><rect x="59.5" y="6" width="1.8" height="1.6" fill="#e82020"/><rect x="59.5" y="9" width="1.8" height="1.6" fill="#e82020"/><rect x="59.5" y="12" width="1.8" height="1.6" fill="#e82020"/><path d="M62.5 7h5M62.5 10h5M62.5 13h5" stroke="#2a5ab8"/>
</svg>

<!-- ============ TASKBAR ============ -->
<div class="a" style="left:0;top:994px;width:1280px;height:30px;background:#d4d0c8;border-top:1px solid #eeeeee"></div><div class="a" style="left:0;top:995px;width:1280px;height:1px;background:#fff"></div>
<!-- start button -->
<div class="a" style="left:2px;top:998px;width:51px;height:22px;background:#d4d0c8;border:1px solid;border-color:#fff #404040 #404040 #fff;box-shadow:inset -1px -1px #808080"></div>
<svg style="left:5px;top:1001px" width="16" height="16">
 <path d="M1 3 Q4 1.5 7 3 L6.2 7.6 Q3.5 6.5 0.3 7.8Z" fill="#f0581a"/>
 <path d="M8 3.2 Q11 4.5 14.5 3 L13.7 7.5 Q10.5 9 7.2 7.8Z" fill="#46b02a"/>
 <path d="M0.2 8.8 Q3.4 7.6 6 8.7 L5.2 13.3 Q2.5 12 -0.6 13.3Z" fill="#2a86e0"/>
 <path d="M7 8.9 Q10.4 10.1 13.5 8.6 L12.7 13 Q9.6 14.6 6.2 13.3Z" fill="#f8c81a"/>
</svg>
<div class="t b" style="left:22px;top:1001px;font-size:12px;color:#000">Пуск</div>
<!-- separators -->
<div class="a" style="left:60px;top:1000px;width:3px;height:20px;border-left:1px solid #fff;border-right:1px solid #808080;background:#f4f2ee"></div>
<div class="a" style="left:305px;top:1000px;width:3px;height:20px;border-left:1px solid #fff;border-right:1px solid #808080;background:#f4f2ee"></div>
<div class="a" style="left:1034px;top:1000px;width:3px;height:20px;border-left:1px solid #fff;border-right:1px solid #808080;background:#f4f2ee"></div>
<div class="a" style="left:1065px;top:999px;width:2px;height:22px;border-left:1px solid #808080;border-right:1px solid #fff"></div>
<!-- quick launch icons -->
<svg style="left:69px;top:1001px" width="16" height="16"><use href="#i-ol"/></svg>
<svg style="left:94px;top:1001px" width="17" height="17"><use href="#i-ie"/></svg>
<svg style="left:116px;top:1001px" width="16" height="16"><use href="#i-plane"/></svg>
<svg style="left:141px;top:1000px" width="16" height="17"><rect x="2" y="1" width="11" height="15" rx="1" fill="#7ab0e8" stroke="#3a70c0"/><rect x="4" y="3" width="7" height="3" fill="#d8ecff"/><path d="M4 8h2M7.5 8h2M4 10.5h2M7.5 10.5h2M4 13h2M7.5 13h2" stroke="#e8f4ff" stroke-width="1.2"/></svg>
<svg style="left:162px;top:1001px" width="17" height="16"><path d="M1 3h5l1 1.5h8v10H1z" fill="#f8d878" stroke="#c89a30"/><rect x="3" y="6" width="10" height="7" fill="#fff8d8" stroke="#c8a040" stroke-width="0.6"/></svg>
<svg style="left:185px;top:1001px" width="16" height="16"><rect x="1" y="2" width="13" height="13" rx="2" fill="#3aa0f0" stroke="#1a60c0"/><circle cx="7.5" cy="8.5" r="4" fill="#fff"/><text x="4.5" y="12" font-size="9" font-weight="bold" font-family="Liberation Sans" fill="#1a60c0">e</text></svg>
<svg style="left:208px;top:1001px" width="16" height="16"><circle cx="8" cy="8" r="7" fill="#e8f0f8" stroke="#3a7ad0" stroke-width="1.5"/><circle cx="8" cy="8" r="4.5" fill="#1e58c8"/><path d="M6.5 5.5 L11 8 L6.5 10.5Z" fill="#fff"/></svg>
<svg style="left:232px;top:1001px" width="15" height="16"><path d="M1 0.5h9l4 4v11H1z" fill="#fff" stroke="#3a6ab8"/><path d="M3 6h8M3 8.5h8M3 11h8M3 13.5h6" stroke="#2a5ab0" stroke-width="1"/></svg>
<svg style="left:254px;top:1001px" width="16" height="16"><use href="#i-plane"/></svg>
<div class="t b" style="left:290px;top:999px;font-size:12px">»</div>
<!-- task buttons -->
<div class="kb" style="left:312px"></div>
<svg style="left:317px;top:1001px" width="14" height="16"><path d="M1 0.5h8l4 4v11H1z" fill="#fff" stroke="#555"/></svg>
<div class="t" style="left:334px;top:1001px"><b>9</b> Libre...</div>
<svg style="left:386px;top:1007px" width="7" height="4"><path d="M0 0H7L3.5 4Z" fill="#000"/></svg>
<div class="kb" style="left:401px"></div>
<svg style="left:405px;top:1001px" width="16" height="16"><use href="#i-ol"/></svg>
<div class="t" style="left:424px;top:1001px">Входящи...</div>
<div class="kb" style="left:490px"></div>
<svg style="left:494px;top:1001px" width="17" height="17"><use href="#i-ie"/></svg>
<div class="t" style="left:512px;top:1001px"><b>8</b> Inter...</div>
<svg style="left:565px;top:1007px" width="7" height="4"><path d="M0 0H7L3.5 4Z" fill="#000"/></svg>
<div class="kb" style="left:579px"></div>
<svg style="left:583px;top:1001px" width="16" height="16"><circle cx="8" cy="8" r="7" fill="#db4437"/><path d="M8 8 L14.5 5 A7 7 0 0 1 5 14.3Z" fill="#f4c20d"/><path d="M8 8 L5 14.3 A7 7 0 0 1 1.2 5.5Z" fill="#0f9d58"/><circle cx="8" cy="8" r="3.3" fill="#4285f4" stroke="#fff" stroke-width="1"/></svg>
<div class="t" style="left:603px;top:1001px">Клинтон ...</div>
<div class="kb" style="left:668px"></div>
<svg style="left:672px;top:1001px" width="16" height="16"><use href="#i-plane"/></svg>
<div class="t" style="left:692px;top:1001px">Термина...</div>
<div class="kb" style="left:757px"></div>
<svg style="left:761px;top:1001px" width="17" height="16"><path d="M1 3h5l1 1.5h8v10H1z" fill="#f8d060" stroke="#b88a20"/><path d="M1 7h15l-1 7.5H1z" fill="#fce080" stroke="#b88a20" stroke-width="0.7"/></svg>
<div class="t" style="left:781px;top:1001px">От Веры ...</div>
<div class="kb" style="left:846px"></div>
<svg style="left:850px;top:1001px" width="16" height="16"><path d="M3 0.5h8l4 4v11H3z" fill="#fff" stroke="#888"/><rect x="0.5" y="1" width="8" height="2" fill="#e02020"/><path d="M4 13 Q7 4 8 3 Q10 9 14 11 Q8 10 4 13Z" fill="none" stroke="#d02020" stroke-width="1.3"/></svg>
<div class="t" style="left:870px;top:1001px">Предопо...</div>
<div class="a" style="left:935px;top:998px;width:86px;height:22px;border:1px solid;border-color:#404040 #fff #fff #404040;box-shadow:inset 1px 1px #808080;background:#eae8e4"></div>
<svg style="left:939px;top:1001px" width="16" height="16"><rect width="16" height="16" fill="url(#gjx)"/><text x="2.5" y="12.5" font-family="Liberation Sans" font-weight="bold" font-size="11" letter-spacing="-0.6" fill="#f0a818">jxt</text></svg>
<div class="t b" style="left:959px;top:1002px">Сирена/...</div>
<!-- EN -->
<div class="a" style="left:1045px;top:1002px;width:16px;height:16px;background:#0a2a78"></div>
<div class="t" style="left:1046px;top:1002px;color:#fff;font-size:11px">EN</div>
<!-- tray -->
<div class="a" style="left:1071px;top:998px;width:209px;height:23px;border:1px solid;border-color:#808080 #fff #fff #808080"></div>
<svg style="left:1075px;top:1001px" width="16" height="16"><rect x="0.5" y="0.5" width="15" height="15" rx="2" fill="#f06a1a"/><path d="M5 4 Q8 2 7 6 M4 9 H12 M3 12 H13" stroke="#fff" stroke-width="1.3" fill="none"/></svg>
<svg style="left:1093px;top:1001px" width="16" height="16"><circle cx="8" cy="8" r="6.5" fill="#fff" stroke="#f0a030" stroke-width="2.2"/><path d="M6 4.5 L11.5 8 L6 11.5Z" fill="#30a8e8"/></svg>
<svg style="left:1111px;top:1001px" width="16" height="16"><rect width="16" height="16" fill="#2a6a6a"/><path d="M9 3 V12" stroke="#fff" stroke-width="1.4"/><circle cx="7" cy="12" r="2.2" fill="#fff"/><path d="M9 3 Q12 4 12 7" stroke="#fff" fill="none"/></svg>
<svg style="left:1128px;top:1001px" width="16" height="16"><circle cx="7" cy="8" r="6.5" fill="#909090"/><circle cx="7" cy="8" r="3.5" fill="#404040"/><path d="M12 12 Q15 10 15 6" stroke="#a0a0d0" fill="none"/></svg>
<svg style="left:1145px;top:1001px" width="16" height="16"><circle cx="5" cy="4" r="3" fill="#2aa040"/><circle cx="9" cy="5" r="3" fill="#3a7ae0"/><path d="M1 14 Q5 6 12 11" fill="#2aa040"/><circle cx="12" cy="12" r="3.5" fill="#e02a2a"/><path d="M10.5 10.5 L13.5 13.5 M13.5 10.5 L10.5 13.5" stroke="#fff" stroke-width="1.2"/></svg>
<svg style="left:1163px;top:1001px" width="16" height="16"><path d="M1 1 H5 V7 L10 1 H14 L6 9 L7 15 H2 Z" fill="#e81a1a"/><path d="M8 9 L14 15" stroke="#000" stroke-width="2.5"/></svg>
<svg style="left:1182px;top:1001px" width="16" height="16"><rect width="16" height="16" fill="#1e6ac8"/><text x="2" y="14" font-family="Liberation Serif" font-size="16" fill="#fff">a</text></svg>
<svg style="left:1199px;top:1001px" width="16" height="16"><path d="M0.5 3 L12 1 V13 L0.5 15Z" fill="#1e4aa0" stroke="#0e2a70"/><rect x="3" y="4" width="12" height="11" fill="#3a7ae0" stroke="#0e2a70"/><path d="M6 7h6M6 9.5h6M6 12h6" stroke="#a8d0ff" stroke-dasharray="1 1"/></svg>
<svg style="left:1217px;top:1001px" width="16" height="16"><rect x="0.5" y="0.5" width="9" height="8" fill="#e02020" stroke="#600"/><rect x="5.5" y="5.5" width="10" height="8" fill="#20c020" stroke="#060"/><path d="M9 15.5h4" stroke="#000" stroke-width="1.5"/></svg>
<div class="t" style="left:1241px;top:1002px;font-size:12px">15:55</div>

</body></html>
